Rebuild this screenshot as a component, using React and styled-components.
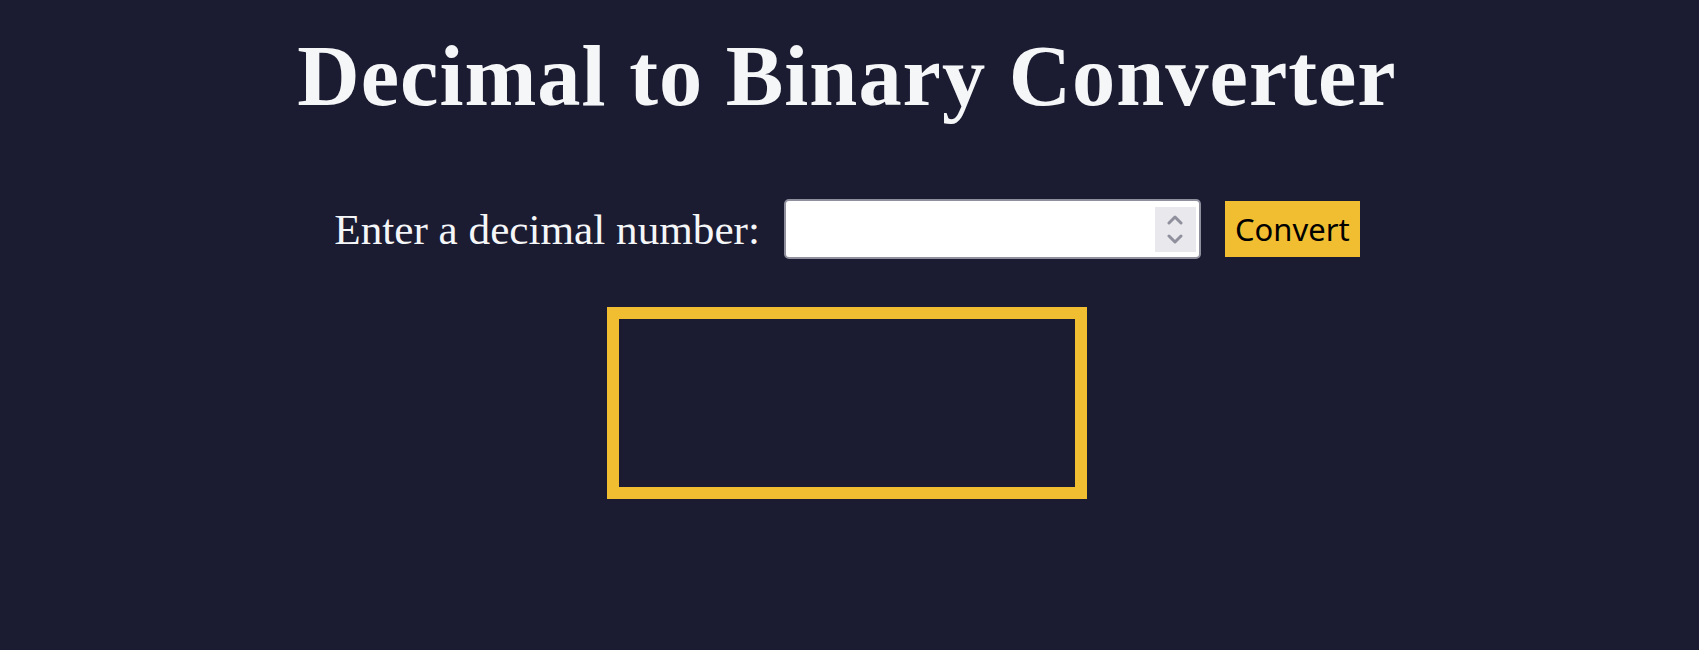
import styled, { createGlobalStyle } from "styled-components";

const GlobalStyle = createGlobalStyle`
  html, body {
    margin: 0;
    padding: 0;
    background-color: #1b1b32;
  }
  body {
    font-family: "Liberation Serif", "Times New Roman", serif;
    color: #f5f6f7;
  }
`;

const Page = styled.main`
  min-height: 650px;
  padding: 27px 5px 0 0;
  box-sizing: border-box;
  display: flex;
  flex-direction: column;
  align-items: center;
`;

const Title = styled.h1`
  margin: 0 0 73px;
  font-size: 86.4px;
  letter-spacing: 1px;
  line-height: 1.15;
  font-weight: 700;
  text-align: center;
`;

const InputRow = styled.div`
  display: flex;
  align-items: center;
  justify-content: center;
  gap: 24px;
`;

const Label = styled.label`
  font-size: 43.2px;
  line-height: normal;
`;

const InputShell = styled.div`
  display: flex;
  align-items: center;
  box-sizing: border-box;
  width: 417px;
  height: 60px;
  padding: 0 3px 0 0;
  background: #ffffff;
  border: 2px solid #8f8f9d;
  border-radius: 5px;
`;

const NumberInput = styled.input`
  flex: 1;
  min-width: 0;
  height: 100%;
  padding: 0 10px;
  border: none;
  outline: none;
  background: transparent;
  font-family: "Liberation Sans", Arial, sans-serif;
  font-size: 32px;
  color: #000;
  appearance: textfield;

  &::-webkit-inner-spin-button,
  &::-webkit-outer-spin-button {
    -webkit-appearance: none;
    margin: 0;
  }
`;

const Spinner = styled.div`
  display: flex;
  flex-direction: column;
  align-items: center;
  justify-content: center;
  gap: 9px;
  width: 41px;
  height: 45px;
  background: #e9e9ed;
  color: #8f8f9d;
`;

const ConvertButton = styled.button`
  height: 56px;
  padding: 0 10px;
  border: none;
  background-color: #f1be32;
  color: #000;
  font-family: "Noto Sans", "Open Sans", sans-serif;
  font-size: 31px;
  cursor: pointer;
`;

const Result = styled.output`
  display: block;
  box-sizing: border-box;
  width: 480px;
  height: 192px;
  margin-top: 48px;
  border: 12px solid #f1be32;
`;

const Chevron = ({ down }) => (
  <svg width="16" height="10" viewBox="0 0 16 10" fill="none">
    <path
      d={down ? "M2 2 L8 8 L14 2" : "M2 8 L8 2 L14 8"}
      stroke="currentColor"
      strokeWidth="3"
      strokeLinecap="round"
      strokeLinejoin="round"
    />
  </svg>
);

export default function App() {
  return (
    <>
      <GlobalStyle />
      <Page>
        <Title>Decimal to Binary Converter</Title>
        <InputRow>
          <Label htmlFor="number-input">Enter a decimal number:</Label>
          <InputShell>
            <NumberInput id="number-input" type="number" />
            <Spinner>
              <Chevron />
              <Chevron down />
            </Spinner>
          </InputShell>
          <ConvertButton type="button">Convert</ConvertButton>
        </InputRow>
        <Result id="result" />
      </Page>
    </>
  );
}
